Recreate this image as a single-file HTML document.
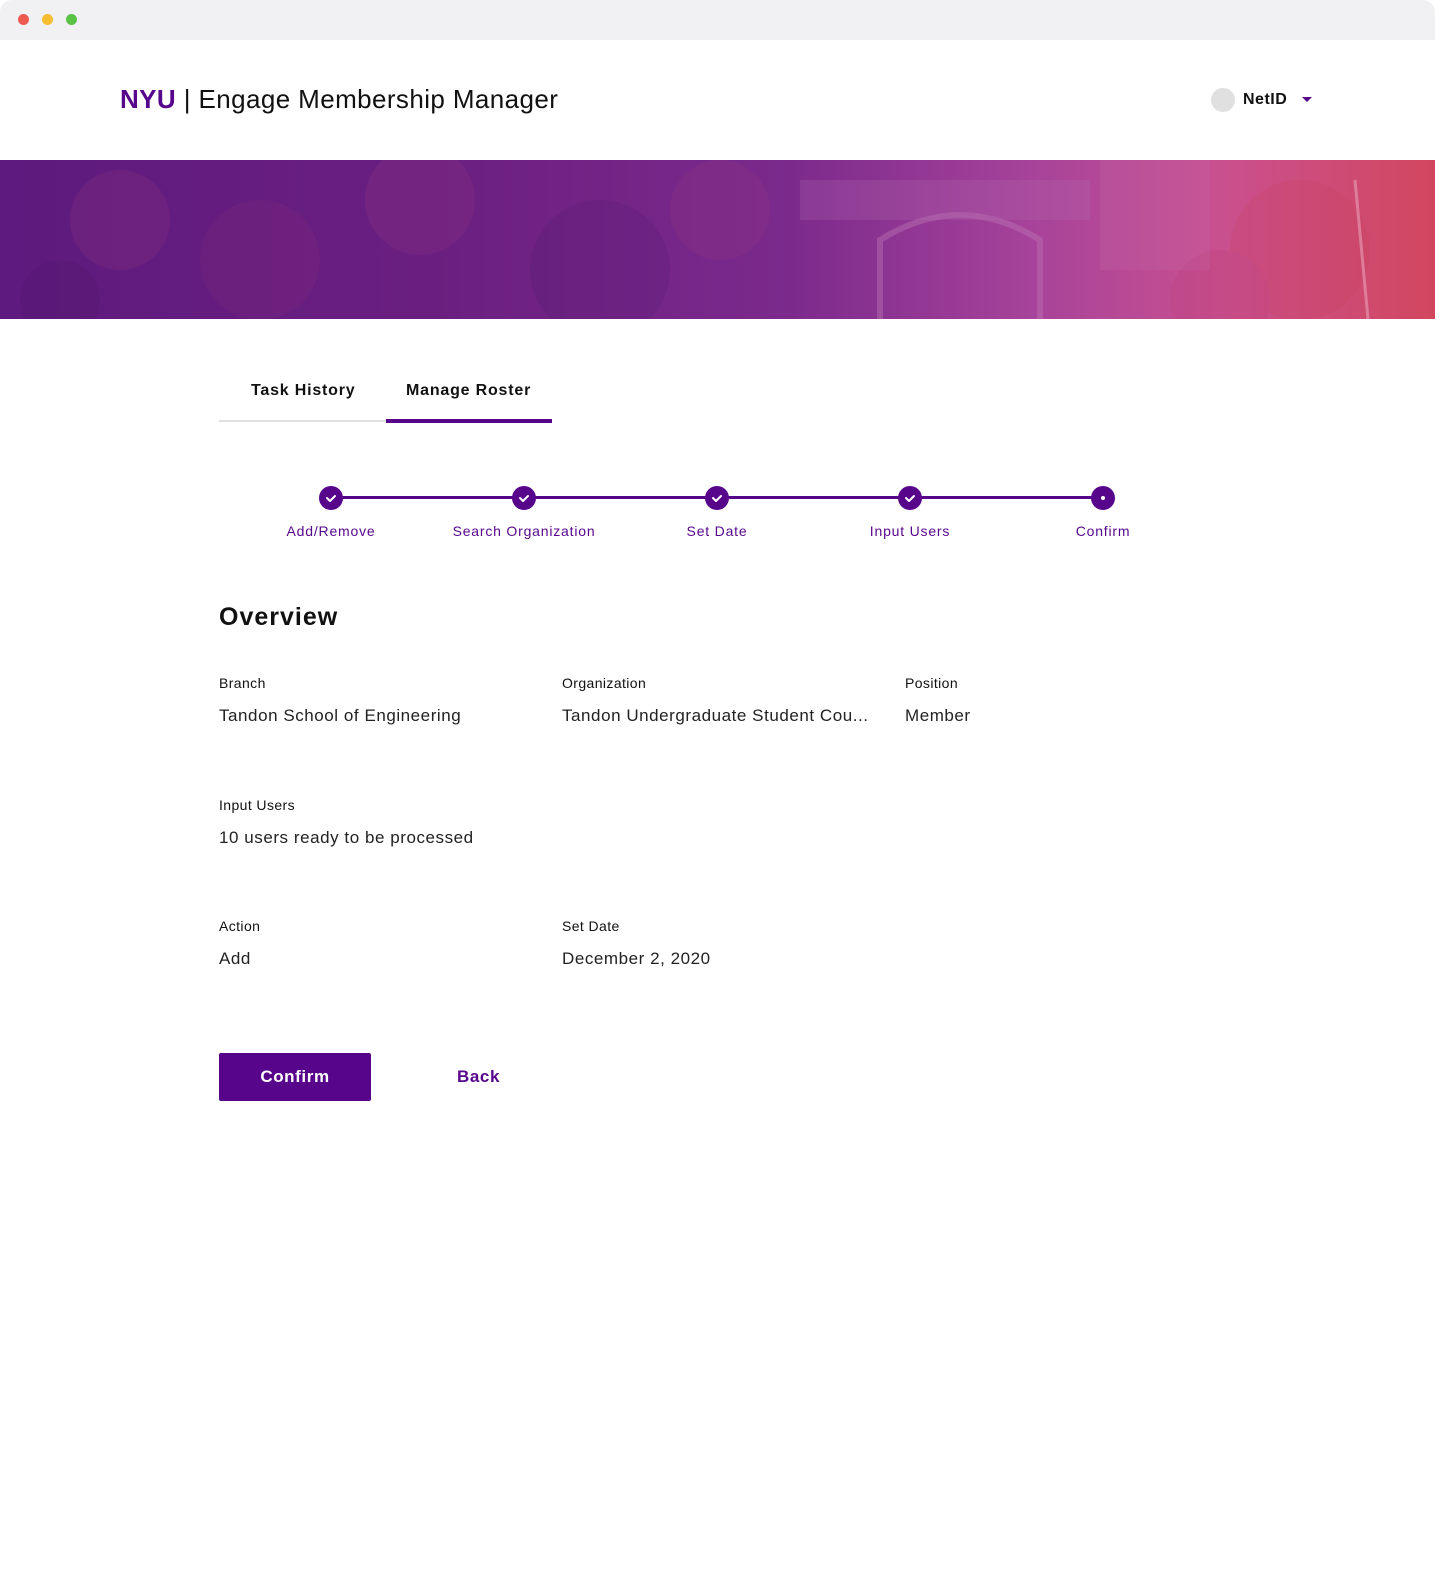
<!DOCTYPE html>
<html><head><meta charset="utf-8"><style>
*{margin:0;padding:0;box-sizing:border-box}
body{width:1440px;height:1573px;background:#fff;font-family:"Liberation Sans",sans-serif;position:relative;overflow:hidden;color:#111}
.abs{position:absolute;white-space:nowrap}
.bar{position:absolute;left:0;top:0;width:1435px;height:40px;background:#f1f1f3;border-radius:12px 12px 0 0}
.dot{position:absolute;top:14px;width:11px;height:11px;border-radius:50%}
.banner{position:absolute;left:0;top:160px;width:1435px;height:159px;overflow:hidden;
background:linear-gradient(90deg,#5e1a7e 0%,#6a1f80 30%,#7b2a8c 55%,#a7439a 72%,#c9508f 85%,#d2475f 100%)}
.stepc{position:absolute;top:486px;width:24px;height:24px;border-radius:50%;background:#57068c}
.lbl{font-size:14px;color:#57068c;top:523px;position:absolute;white-space:nowrap;transform:translateX(-50%);letter-spacing:0.8px}
.h{font-size:14px;color:#111;letter-spacing:0.4px}
.v{font-size:17px;color:#222;letter-spacing:0.55px}
</style></head><body>
<div class="bar"></div>
<div class="dot" style="left:18px;background:#ee5a52"></div>
<div class="dot" style="left:42px;background:#f5bd2f"></div>
<div class="dot" style="left:66px;background:#5ac245"></div>

<div class="abs" style="left:120px;top:84px;font-size:26px;letter-spacing:0.4px"><b style="color:#57068c">NYU</b> <span style="color:#111">| Engage Membership Manager</span></div>
<div class="abs" style="left:1211px;top:88px;width:24px;height:24px;border-radius:50%;background:#e0e0e0"></div>
<div class="abs" style="left:1243px;top:91px;font-size:16px;font-weight:bold;letter-spacing:0.5px">NetID</div>
<div class="abs" style="left:1302px;top:97px;width:0;height:0;border-left:5px solid transparent;border-right:5px solid transparent;border-top:5px solid #57068c"></div>

<div class="banner">
<svg width="1435" height="159" style="position:absolute;left:0;top:0">
<g opacity="0.2">
<circle cx="120" cy="60" r="50" fill="#9a3a80"/><circle cx="260" cy="100" r="60" fill="#8a2e7a"/>
<circle cx="420" cy="40" r="55" fill="#9b3c84"/><circle cx="600" cy="110" r="70" fill="#4e1870"/>
<circle cx="720" cy="50" r="50" fill="#9a3a80"/><circle cx="60" cy="140" r="40" fill="#4a1464"/>
<circle cx="1300" cy="90" r="70" fill="#c8405a"/><circle cx="1220" cy="140" r="50" fill="#b83a70"/>
</g>
<path d="M880 159 V80 Q960 30 1040 80 V159" fill="none" stroke="#c07ab8" stroke-width="6" opacity="0.4"/>
<rect x="800" y="20" width="290" height="40" fill="#b36aae" opacity="0.25"/>
<rect x="1100" y="0" width="110" height="110" fill="#c569a8" opacity="0.25"/>
<line x1="1355" y1="20" x2="1368" y2="159" stroke="#e8a0b8" stroke-width="3" opacity="0.6"/>
</svg>
</div>

<div class="abs" style="left:251px;top:382px;font-size:16px;font-weight:bold;letter-spacing:0.8px">Task History</div>
<div class="abs" style="left:406px;top:382px;font-size:16px;font-weight:bold;letter-spacing:0.8px">Manage Roster</div>
<div class="abs" style="left:219px;top:420px;width:167px;height:2px;background:#e0e0e0"></div>
<div class="abs" style="left:386px;top:419px;width:166px;height:4px;background:#57068c"></div>

<div class="abs" style="left:331px;top:496px;width:772px;height:3px;background:#57068c"></div>
<div class="stepc" style="left:319px"></div>
<div class="stepc" style="left:512px"></div>
<div class="stepc" style="left:705px"></div>
<div class="stepc" style="left:898px"></div>
<div class="stepc" style="left:1091px"></div>
<svg class="abs" style="left:0;top:0" width="1440" height="600">
<g fill="none" stroke="#fff" stroke-width="2" stroke-linecap="round" stroke-linejoin="round">
<path d="M327 498 l3 3 l5 -5"/><path d="M520 498 l3 3 l5 -5"/><path d="M713 498 l3 3 l5 -5"/><path d="M906 498 l3 3 l5 -5"/>
</g><circle cx="1103" cy="498" r="2" fill="#fff"/></svg>
<div class="lbl" style="left:331px">Add/Remove</div>
<div class="lbl" style="left:524px">Search Organization</div>
<div class="lbl" style="left:717px">Set Date</div>
<div class="lbl" style="left:910px">Input Users</div>
<div class="lbl" style="left:1103px">Confirm</div>

<div class="abs" style="left:219px;top:603px;font-size:25px;font-weight:bold;letter-spacing:1px">Overview</div>

<div class="abs h" style="left:219px;top:675px">Branch</div>
<div class="abs v" style="left:219px;top:706px">Tandon School of Engineering</div>
<div class="abs h" style="left:562px;top:675px">Organization</div>
<div class="abs v" style="left:562px;top:706px">Tandon Undergraduate Student Cou...</div>
<div class="abs h" style="left:905px;top:675px">Position</div>
<div class="abs v" style="left:905px;top:706px">Member</div>

<div class="abs h" style="left:219px;top:797px">Input Users</div>
<div class="abs v" style="left:219px;top:828px">10 users ready to be processed</div>

<div class="abs h" style="left:219px;top:918px">Action</div>
<div class="abs v" style="left:219px;top:949px">Add</div>
<div class="abs h" style="left:562px;top:918px">Set Date</div>
<div class="abs v" style="left:562px;top:949px">December 2, 2020</div>

<div class="abs" style="left:219px;top:1053px;width:152px;height:48px;background:#57068c;border-radius:2px;color:#fff;font-weight:bold;font-size:17px;text-align:center;line-height:48px;letter-spacing:0.6px">Confirm</div>
<div class="abs" style="left:457px;top:1067px;color:#57068c;font-weight:bold;font-size:17px;letter-spacing:0.6px">Back</div>
</body></html>
